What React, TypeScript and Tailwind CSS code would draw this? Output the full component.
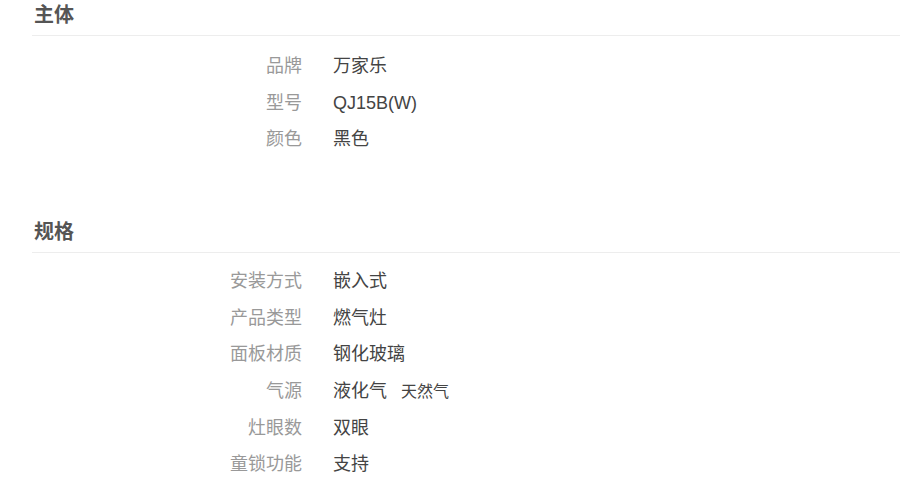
import React from "react";

type Row = { label: string; values: string[] };

const sections: { title: string; rows: Row[]; pt: string; mb: string }[] = [
  {
    title: "主体",
    pt: "pt-[12px]",
    mb: "mb-[59px]",
    rows: [
      { label: "品牌", values: ["万家乐"] },
      { label: "型号", values: ["QJ15B(W)"] },
      { label: "颜色", values: ["黑色"] },
    ],
  },
  {
    title: "规格",
    pt: "pt-[10px]",
    mb: "mb-0",
    rows: [
      { label: "安装方式", values: ["嵌入式"] },
      { label: "产品类型", values: ["燃气灶"] },
      { label: "面板材质", values: ["钢化玻璃"] },
      { label: "气源", values: ["液化气", "天然气"] },
      { label: "灶眼数", values: ["双眼"] },
      { label: "童锁功能", values: ["支持"] },
    ],
  },
];

export default function App() {
  return (
    <div
      className="w-[900px] h-[481px] overflow-hidden bg-white pl-[32px]"
      style={{ fontFamily: '"Liberation Sans", "Noto Sans CJK SC", sans-serif' }}
    >
      {sections.map((s) => (
        <div key={s.title} className={s.mb}>
          <div className="h-[36px] border-b border-[#ededed] pl-[2px]">
            <div className="h-[30px] leading-[30px] text-[20px] font-bold text-[#555]">{s.title}</div>
          </div>
          <div className={s.pt}>
            {s.rows.map((r) => (
              <div key={r.label} className="flex items-center h-[36.7px]">
                <div className="w-[270px] text-right text-[18px] text-[#999]">{r.label}</div>
                <div className="ml-[31px] flex items-baseline text-[18px] text-[#444]">
                  {r.values.map((v, i) => (
                    <span key={v} className={i > 0 ? "ml-[14px] text-[16px]" : ""}>
                      {v}
                    </span>
                  ))}
                </div>
              </div>
            ))}
          </div>
        </div>
      ))}
    </div>
  );
}
